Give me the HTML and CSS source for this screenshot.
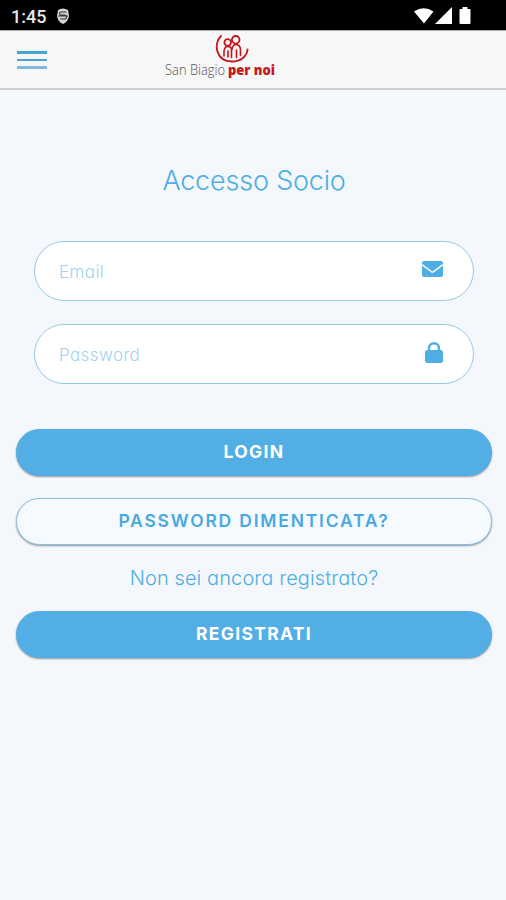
FILE: index.html
```html
<!DOCTYPE html>
<html lang="it">
<head>
    <meta charset="UTF-8">
    <meta name="viewport" content="width=device-width, initial-scale=1.0">
    <title>Accesso Socio</title>
    <link rel="stylesheet" href="styles.css">
</head>
<body>
    <div class="status-bar">
        <span class="clock">1:45</span>
        <svg class="status-app" width="14" height="18" viewBox="0 0 14 18">
            <path d="M2 3 Q7 0 12 3 L13 9 Q12 15 7 17 Q2 15 1 9Z" fill="#d5d5d5"/>
            <path d="M10.500 5H5Q3.500 5 3.500 6.500T5 8H9Q10.500 8 10.500 10T9 12H4M2 9H12" fill="none" stroke="#333" stroke-width="1.100"/>
        </svg>
        <svg class="status-icons" width="60" height="20" viewBox="0 0 60 20">
            <path d="M1 5.500Q10.700-1 20.500 5.500L11 17.500Z" fill="#fff"/>
            <path d="M22 18L39 1V18Z" fill="#fff"/>
            <path d="M52 1h5v2h2q1 0 1 1v13q0 1-1 1h-9q-1 0-1-1V4q0-1 1-1h2Z" transform="translate(-2.500 0)" fill="#fff"/>
        </svg>
    </div>

    <header class="header">
        <button class="menu" type="button" aria-label="Menu">
            <span></span>
            <span></span>
            <span></span>
        </button>
        <svg class="logo" width="116" height="56" viewBox="0 0 116 56">
            <g fill="none" stroke="#c4161c" stroke-linecap="round">
                <path d="M56 4C48 12 51 29.500 67 29.500C76 29.500 82 24 82.500 17.500" stroke-width="1.900"/>
                <circle cx="62.700" cy="10.500" r="3.300" stroke-width="1.800"/>
                <circle cx="70.700" cy="7.800" r="3.800" stroke-width="1.800"/>
                <path d="M59 24V19Q59.500 14.500 63 14.500Q66.500 14.500 66.500 18V25.500M67 17.500Q67.500 12.500 71 12.500Q75.500 13 75.500 18V23.500M71.500 18V25.500M63 19V25" stroke-width="1.600"/>
            </g>
            <text class="logo-light" x="0" y="42.500" textLength="60" lengthAdjust="spacingAndGlyphs">San Biagio</text>
            <text class="logo-bold" x="63" y="42.500" textLength="47" lengthAdjust="spacingAndGlyphs">per noi</text>
        </svg>
    </header>

    <main class="login">
        <h1>Accesso Socio</h1>
        <form id="loginForm">
            <div class="fields">
                <div class="form-group">
                    <input class="input-email" type="email" name="email" placeholder="Email">
                    <svg width="21" height="16" viewBox="0 0 21 16" fill="#4faee3">
                        <path d="M2 0H19Q21 0 21 2V2.700L10.500 10.500L0 2.700V2Q0 0 2 0Z"/>
                        <path d="M0 4.500L9 11.300Q10.500 12.300 12 11.300L21 4.500V14Q21 16 19 16H2Q0 16 0 14Z"/>
                    </svg>
                </div>
                <div class="form-group">
                    <input class="input-password" type="password" name="password" placeholder="Password">
                    <svg class="lock" width="18" height="21" viewBox="0 0 18 21">
                        <rect y="8" width="18" height="13" rx="2.500" fill="#4faee3"/>
                        <path d="M4 10V6.200a5 5 0 0 1 10 0V10" fill="none" stroke="#4faee3" stroke-width="2.400"/>
                    </svg>
                </div>
            </div>
            <button class="btn btn-login" type="submit">LOGIN</button>
            <button class="btn btn-outline" type="button">PASSWORD DIMENTICATA?</button>
            <p class="register-text">Non sei ancora registrato?</p>
            <button class="btn btn-register" type="button">REGISTRATI</button>
        </form>
    </main>
</body>
</html>
```
FILE: styles.css
```css
* {
    margin: 0;
    padding: 0;
    box-sizing: border-box;
}

body {
    background: #f4f8fc;
    min-height: 100vh;
    font-family: Inter, Lato, sans-serif;
    font-feature-settings: "cv11";
    color: #4faee3;
}

button,
input {
    font-family: inherit;
    font-feature-settings: inherit;
}

.status-bar {
    display: flex;
    align-items: center;
    height: 30px;
    padding: 2px 33px 0 11px;
    background: #000;
}

.clock {
    width: 45px;
    font-family: Roboto, sans-serif;
    font-size: 18px;
    font-weight: 500;
    color: #e8e8e8;
}

.status-icons {
    margin-left: auto;
}

.header {
    display: flex;
    align-items: flex-start;
    height: 60px;
    padding: 4px 17px 0;
    background: #f7f7f7;
    border-top: 1px solid #aaa;
    border-bottom: 2px solid #cbd0d3;
}

.menu {
    display: flex;
    flex-direction: column;
    gap: 5px;
    width: 30px;
    margin-top: 16px;
    background: none;
    border: none;
}

.menu span {
    height: 2.5px;
    background: #43a5d8;
}

.menu span:last-child {
    background: #82badf;
}

.logo {
    margin-left: 118px;
    margin-top: -3px;
}

.logo-light {
    font-family: "Open Sans", sans-serif;
    font-size: 14px;
    font-weight: 300;
    fill: #555;
}

.logo-bold {
    font-family: "Open Sans", sans-serif;
    font-size: 14px;
    font-weight: 800;
    fill: #c4161c;
}

.login {
    padding: 72px 14px 0 16px;
}

h1 {
    font-size: 27px;
    font-weight: 300;
    line-height: 38px;
    text-align: center;
    letter-spacing: -0.2px;
}

.fields {
    display: flex;
    flex-direction: column;
    gap: 23px;
    padding: 41px 18px 0;
    margin-bottom: 45px;
}

.form-group {
    display: flex;
    align-items: center;
    height: 60px;
    padding: 0 30px 0 24px;
    background: #fff;
    border: 1px solid #97c9ea;
    border-radius: 30px;
}

.form-group svg {
    margin-bottom: 4px;
}

.form-group .lock {
    margin-bottom: 3px;
}

input {
    flex: 1;
    padding-top: 2px;
    border: none;
    outline: none;
    background: none;
    font-size: 17px;
    font-weight: 300;
    letter-spacing: 0.4px;
}

input::placeholder {
    color: #a3d2ef;
}

.btn {
    display: block;
    width: 100%;
    height: 47px;
    background: #52aee4;
    border: none;
    border-radius: 24px;
    box-shadow: 0 1px 2px rgba(0, 0, 0, 0.4);
    color: #fff;
    font-size: 17.5px;
    font-weight: 700;
    letter-spacing: 1.3px;
    padding-bottom: 2px;
}

.btn-outline {
    margin: 22px 0 19px;
    background: #f5faff;
    border: 1px solid #8bbfe4;
    color: #4aa8df;
    font-weight: 600;
    letter-spacing: 1.8px;
}

.register-text {
    height: 47px;
    font-size: 20px;
    font-weight: 300;
    line-height: 28px;
    text-align: center;
    letter-spacing: 0.1px;
}
```
